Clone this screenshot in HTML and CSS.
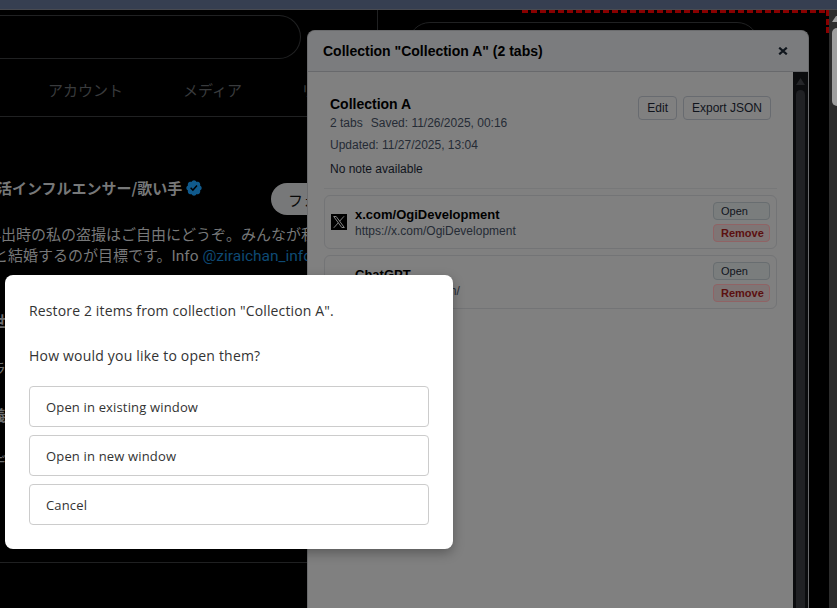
FILE: index.html
```html
<!DOCTYPE html>
<html lang="ja">
<head>
  <meta charset="UTF-8">
  <meta name="viewport" content="width=device-width, initial-scale=1.0">
  <title>Collection Manager</title>
  <link rel="stylesheet" href="styles.css">
</head>
<body>
<div class="topbar"></div>
<div class="page">
  <!-- Timeline -->
  <div class="timeline">
    <div class="search"></div>
    <div class="tabs">
      <span class="tab-accounts">アカウント</span>
      <span class="tab-media">メディア</span>
      <span>リスト</span>
    </div>
    <div class="profile">
      <div class="profile-head">
        <div class="name">活インフルエンサー/歌い手
          <svg class="badge" viewBox="0 0 22 22"><path fill="#105a8c" d="M20.396 11c-.018-.646-.215-1.275-.57-1.816-.354-.54-.852-.972-1.438-1.246.223-.607.27-1.264.14-1.897-.131-.634-.437-1.218-.882-1.687-.47-.445-1.053-.75-1.687-.882-.633-.13-1.29-.083-1.897.14-.273-.587-.704-1.086-1.245-1.44S11.647 1.62 11 1.604c-.646.017-1.273.213-1.813.568s-.969.854-1.24 1.44c-.608-.223-1.267-.272-1.902-.14-.635.13-1.22.436-1.69.882-.445.47-.749 1.055-.878 1.688-.13.633-.08 1.29.144 1.896-.587.274-1.087.705-1.443 1.245-.356.54-.555 1.17-.574 1.817.02.647.218 1.276.574 1.817.356.54.856.972 1.443 1.245-.224.606-.274 1.263-.144 1.896.13.634.433 1.218.877 1.688.47.443 1.054.747 1.687.878.633.132 1.29.084 1.897-.136.274.586.705 1.084 1.246 1.439.54.354 1.17.551 1.816.569.647-.016 1.276-.213 1.817-.567s.972-.854 1.245-1.44c.604.239 1.266.296 1.903.164.636-.132 1.22-.447 1.68-.907.46-.46.776-1.044.908-1.681s.075-1.299-.165-1.903c.586-.274 1.084-.705 1.439-1.246.354-.54.551-1.17.569-1.816z"/><path d="M9.662 14.85l-3.429-3.428 1.293-1.302 2.072 2.072 4.4-4.794 1.347 1.246z"/></svg>
        </div>
        <button class="follow">フォロー</button>
      </div>
      <p class="bio bio-first">外出時の私の盗撮はご自由にどうぞ。みんなが私</p>
      <p class="bio bio-second">と結婚するのが目標です。<span class="latin">Info <a href="#">@ziraichan_info</a></span></p>
    </div>
    <div class="rest">
      <span class="strong">世</span>
      <span>ラ</span>
      <span class="strong">義</span>
      <span>デ</span>
    </div>
  </div>
  <div class="sidebar">
    <div class="side-search"></div>
  </div>
  <div class="marks"></div>
  <div class="page-scroll">
    <svg width="8" height="6" viewBox="0 0 8 6"><path fill="#9f9f9f" d="M3 6 7 0h1v6z"/></svg>
    <div class="page-thumb"></div>
  </div>
</div>

<!-- Collection panel -->
<div class="panel">
  <div class="panel-header">
    <h2>Collection "Collection A" (2 tabs)</h2>
    <svg class="close" width="10" height="8" viewBox="0 0 10 8"><path d="M1.2.7 8.8 7.3M8.8.7 1.2 7.3" stroke="#10161d" stroke-width="2.2"/></svg>
  </div>
  <div class="panel-body">
    <div class="panel-content">
      <div class="summary">
        <div>
          <h3>Collection A</h3>
          <p class="meta"><span>2 tabs</span><span>Saved: 11/26/2025, 00:16</span></p>
          <p class="meta">Updated: 11/27/2025, 13:04</p>
          <p class="note">No note available</p>
        </div>
        <div class="actions">
          <button>Edit</button>
          <button>Export JSON</button>
        </div>
      </div>
      <div class="item">
        <svg class="favicon" viewBox="0 0 16 16"><path d="M0 0h16v16H0z"/><path d="M2.7 2.5h2.5l8.1 11h-2.5zM13 2.3 8.7 7.1M7.3 8.8l-4.5 5" fill="none" stroke="#929292" stroke-width=".9"/></svg>
        <div class="item-text">
          <h4>x.com/OgiDevelopment</h4>
          <p>https://x.com/OgiDevelopment</p>
        </div>
        <div class="item-actions">
          <button class="open">Open</button>
          <button class="remove">Remove</button>
        </div>
      </div>
      <div class="item">
        <div class="favicon"></div>
        <div class="item-text">
          <h4>ChatGPT</h4>
          <p>https://chatgpt.com/</p>
        </div>
        <div class="item-actions">
          <button class="open">Open</button>
          <button class="remove">Remove</button>
        </div>
      </div>
    </div>
    <div class="panel-scroll">
      <svg width="9" height="7" viewBox="0 0 9 7"><path fill="#242528" d="M4.5 0 9 7H0z"/></svg>
      <div class="panel-thumb"></div>
    </div>
  </div>
</div>

<!-- Restore dialog -->
<div class="dialog">
  <p>Restore 2 items from collection "Collection A".</p>
  <p class="question">How would you like to open them?</p>
  <div class="choices">
    <button>Open in existing window</button>
    <button>Open in new window</button>
    <button>Cancel</button>
  </div>
</div>
</body>
</html>
```

FILE: styles.css
```css
* {
    box-sizing: border-box;
}
body {
    margin: 0;
    height: 608px;
    overflow: hidden;
    background-color: #000;
    font-family: "Liberation Sans", Arial, sans-serif;
}
h2, h3, h4, p {
    margin: 0;
}
button {
    font-family: inherit;
    background: none;
    white-space: nowrap;
}
.topbar {
    height: 10px;
    background-color: #363f51;
    border-bottom: 1px solid #484a50;
}
.page {
    display: flex;
    position: relative;
    height: 598px;
    overflow: hidden;
}

/* Timeline */
.timeline {
    width: 378px;
    flex: none;
    border-right: 1px solid #202122;
    font-family: "Noto Sans CJK JP", sans-serif;
    font-size: 15px;
    color: #777879;
    white-space: nowrap;
    overflow: hidden;
}
.search {
    width: 301px;
    height: 44px;
    margin-top: 5px;
    border: 1px solid #202122;
    border-left: none;
    border-radius: 0 22px 22px 0;
}
.tabs {
    display: flex;
    align-items: center;
    height: 58px;
    padding: 4px 0 0 48px;
    border-bottom: 1px solid #202122;
    color: #393b3d;
}
.tab-accounts {
    margin-right: 60px;
}
.tab-media {
    margin-right: 59px;
}
.profile {
    height: 188px;
    padding-top: 59px;
}
.profile-head {
    display: flex;
    height: 47px;
    justify-content: space-between;
}
.name {
    display: flex;
    align-items: center;
    height: 22px;
    margin-left: -3px;
    font-weight: bold;
}
.badge {
    width: 18px;
    height: 18px;
    margin: 2px 0 0 3px;
}
.follow {
    width: 106px;
    height: 32px;
    margin-top: 7px;
    padding: 0 17px;
    border: none;
    border-radius: 16px;
    background-color: #777879;
    color: #08090a;
    font-size: 15px;
    text-align: left;
}
.bio {
    height: 21px;
    line-height: 22px;
}
.bio-first {
    margin-left: -14px;
}
.bio-second {
    margin-left: -7px;
}
.latin {
    font-family: Roboto, sans-serif;
    font-size: 15.5px;
}
.bio a {
    color: #0e4a74;
    text-decoration: none;
}
.rest {
    display: flex;
    flex-direction: column;
    gap: 25px;
    height: 258px;
    padding-top: 5px;
    border-bottom: 1px solid #202122;
}
.rest span {
    line-height: 22px;
    margin-left: -9px;
}
.strong {
    font-weight: bold;
}
.sidebar {
    flex: 1;
    padding: 12px 0 0 30px;
}
.side-search {
    width: 351px;
    height: 44px;
    border: 1px solid #202122;
    border-radius: 22px;
}
.marks {
    position: absolute;
    top: 0;
    right: 8px;
    width: 307px;
    height: 23px;
    background:
        repeating-linear-gradient(to right, #890000 0 6px, transparent 6px 9px) 0 0 / 100% 3px no-repeat,
        repeating-linear-gradient(to bottom, #890000 0 6px, transparent 6px 8.7px) 100% 0 / 3px 100% no-repeat;
}
.page-scroll {
    display: flex;
    flex-direction: column;
    align-items: flex-end;
    gap: 6px;
    width: 8px;
    padding-top: 6px;
    background-color: #2c2c2c;
}
.page-thumb {
    width: 5px;
    height: 78px;
    background-color: #9f9f9f;
    border-radius: 5px 0 0 5px;
}

/* Collection panel */
.panel {
    position: absolute;
    top: 30px;
    left: 307px;
    width: 502px;
    height: 578px;
    display: flex;
    flex-direction: column;
    border: 1px solid #6b6c6e;
    border-bottom: none;
    border-radius: 8px 8px 0 0;
    background-color: #808080;
    overflow: hidden;
}
.panel-header {
    display: flex;
    align-items: center;
    justify-content: space-between;
    height: 41px;
    flex: none;
    padding: 0 20px 0 15px;
    border-bottom: 1px solid #68696c;
    background-color: #7b7c7e;
}
.panel-header h2 {
    font-size: 14px;
    line-height: 16px;
}
.panel-body {
    display: flex;
    flex: 1;
}
.panel-content {
    flex: 1;
    padding: 16px;
}
.summary {
    display: flex;
    justify-content: space-between;
    height: 101px;
    margin-bottom: 6px;
    padding: 8px 6px 0;
    border-bottom: 1px solid #777879;
}
.summary h3 {
    font-size: 14px;
    line-height: 16px;
}
.meta {
    display: flex;
    gap: 8px;
    font-size: 12px;
    line-height: 22px;
    color: #252b35;
}
.note {
    margin-top: 2px;
    font-size: 12px;
    line-height: 22px;
    color: #10141c;
}
.actions {
    display: flex;
    gap: 6px;
}
.actions button {
    height: 24px;
    padding: 0 8px;
    border: 1px solid #686b70;
    border-radius: 4px;
    color: #10141c;
    font-size: 12px;
}
.item {
    display: flex;
    align-items: center;
    gap: 8px;
    height: 54px;
    margin-bottom: 6px;
    padding: 0 6px;
    border: 1px solid #737476;
    border-radius: 6px;
}
.favicon {
    width: 16px;
    height: 16px;
    flex: none;
}
.item-text {
    flex: 1;
}
.item-text h4 {
    font-size: 13px;
    line-height: 17px;
}
.item-text p {
    font-size: 12px;
    line-height: 16px;
    color: #252b35;
}
.item-actions {
    display: flex;
    flex-direction: column;
    gap: 4px;
    width: 57px;
}
.item-actions button {
    height: 18px;
    padding: 0 7px;
    border-radius: 4px;
    font-size: 11px;
    line-height: 16px;
    text-align: left;
}
.open {
    border: 1px solid #686d70;
    background-color: #7a7d7d;
    color: #10141c;
}
.remove {
    border: 1px solid #906365;
    background-color: #7f7575;
    color: #5b1010;
    font-weight: bold;
}
.panel-scroll {
    display: flex;
    flex-direction: column;
    align-items: center;
    gap: 5px;
    width: 15px;
    padding-top: 6px;
    background-color: #0b0c0e;
}
.panel-thumb {
    flex: 1;
    width: 9px;
    border-radius: 5px 5px 0 0;
    background-color: #202124;
}

/* Restore dialog */
.dialog {
    position: absolute;
    top: 275px;
    left: 5px;
    width: 448px;
    height: 274px;
    padding: 24px;
    border-radius: 8px;
    background-color: #fff;
    box-shadow: 0 4px 12px rgba(0, 0, 0, 0.3);
    color: #333;
    font-family: "Open Sans", sans-serif;
}
.dialog p {
    font-size: 14px;
    line-height: 23px;
    letter-spacing: 0.14px;
}
.dialog .question {
    margin-top: 22px;
    letter-spacing: 0.2px;
}
.choices {
    display: flex;
    flex-direction: column;
    gap: 8px;
    margin-top: 19px;
}
.choices button {
    height: 41px;
    padding: 0 16px;
    border: 1px solid #ccc;
    border-radius: 4px;
    color: #333;
    font-size: 13px;
    letter-spacing: 0.16px;
    text-align: left;
}
```
